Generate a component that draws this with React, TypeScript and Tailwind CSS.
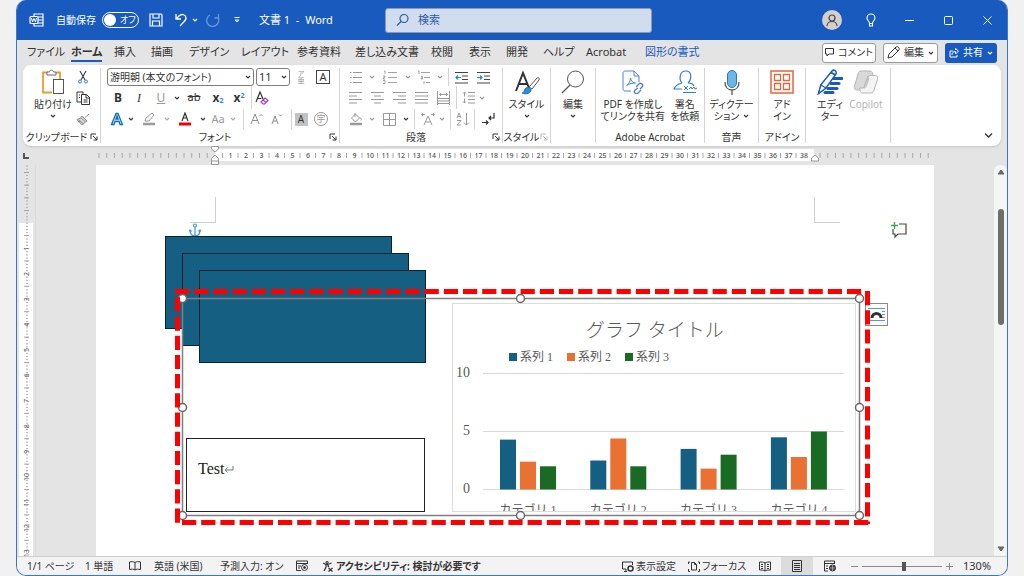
import type { ReactNode } from 'react';
import { useState } from 'react';

const TABS = [
  { label: 'ファイル', width: 'w-[44px]' },
  { label: 'ホーム', width: 'w-[43px]' },
  { label: '挿入', width: 'w-[37px]' },
  { label: '描画', width: 'w-[38px]' },
  { label: 'デザイン', width: 'w-[52px]' },
  { label: 'レイアウト', width: 'w-[56px]' },
  { label: '参考資料', width: 'w-[58px]' },
  { label: '差し込み文書', width: 'w-[76px]' },
  { label: '校閲', width: 'w-[38px]' },
  { label: '表示', width: 'w-[37px]' },
  { label: '開発', width: 'w-[37px]' },
  { label: 'ヘルプ', width: 'w-[43px]' },
  { label: 'Acrobat', width: 'w-[59px]' },
  { label: '図形の書式', width: 'w-[60px]' },
];

const SERIES = [
  { name: '系列 1', color: '#156082' },
  { name: '系列 2', color: '#e97132' },
  { name: '系列 3', color: '#196b24' },
];

const CATEGORIES = [
  { name: 'カテゴリ 1', values: [4.3, 2.4, 2] },
  { name: 'カテゴリ 2', values: [2.5, 4.4, 2] },
  { name: 'カテゴリ 3', values: [3.5, 1.8, 3] },
  { name: 'カテゴリ 4', values: [4.5, 2.8, 5] },
];

interface IconProps {
  w: number;
  h: number;
  className?: string;
  children: ReactNode;
}

function Icon({ w, h, className, children }: IconProps) {
  return (
    <svg
      width={w}
      height={h}
      viewBox={`0 0 ${w} ${h}`}
      fill="none"
      stroke="currentColor"
      strokeWidth="1"
      aria-hidden="true"
      className={`shrink-0 ${className ?? ''}`}
    >
      {children}
    </svg>
  );
}

function Chevron({ className }: { className?: string }) {
  return (
    <Icon w={6} h={4} className={className}>
      <path d="M1 1l2 2 2-2" strokeWidth="1.1" />
    </Icon>
  );
}

interface ToolProps {
  label: string;
  className: string;
  children: ReactNode;
}

function Tool({ label, className, children }: ToolProps) {
  return (
    <button type="button" aria-label={label} title={label} className={`flex shrink-0 items-center justify-center self-stretch ${className}`}>
      {children}
    </button>
  );
}

function Divider({ className }: { className: string }) {
  return (
    <span className={`flex shrink-0 justify-center self-stretch ${className}`}>
      <span className="w-px bg-[#d4d4d4]" />
    </span>
  );
}

interface GroupProps {
  label?: string;
  className: string;
  launcher?: 'enabled' | 'disabled';
  children: ReactNode;
}

function Group({ label, className, launcher, children }: GroupProps) {
  return (
    <section aria-label={label} className={`flex h-[75px] shrink-0 flex-col justify-between border-r border-[#d4d4d4] ${className}`}>
      <div className="flex">{children}</div>
      <div className="flex h-3 items-center text-[10px] leading-3 whitespace-nowrap">
        <span className="flex-1 text-center">{label}</span>
        {launcher && (
          <button
            type="button"
            aria-label={`${label}の詳細設定`}
            disabled={launcher === 'disabled'}
            className="flex w-[10px] shrink-0 items-center disabled:text-[#bbb]"
          >
            <Icon w={8} h={8}>
              <path d="M1 6V1h5M3 3l4 4M7 3.5V7H3.5" />
            </Icon>
          </button>
        )}
      </div>
    </section>
  );
}

interface BigButtonProps {
  icon: ReactNode;
  lines: string[];
  chevron?: 'below' | 'inline';
  className?: string;
}

function BigButton({ icon, lines, chevron, className }: BigButtonProps) {
  return (
    <button type="button" className={`flex flex-col items-center text-[10px] leading-3 whitespace-nowrap ${className ?? ''}`}>
      <span className="mb-[2px] flex h-7 items-center justify-center">{icon}</span>
      {lines.map((line, i) => (
        <span key={line} className="flex items-center gap-1">
          {line}
          {chevron === 'inline' && i === lines.length - 1 && <Chevron />}
        </span>
      ))}
      {chevron === 'below' && <Chevron className="mt-1" />}
    </button>
  );
}

function TitleBar() {
  return (
    <header className="flex h-10 shrink-0 items-center bg-[#185abd] text-white">
      <div className="flex h-full w-[368px] shrink-0 items-center pl-3">
        <Icon w={16} h={16}>
          <path d="M5 4.5V2h9v12H5v-2.5M9 5h5M9 8h5M9 11h5" strokeWidth="1.2" />
          <rect x="1" y="4.5" width="8" height="7" rx="1" fill="#185abd" strokeWidth="1.2" />
          <path d="M2.5 6l1 4L5 6.500l1.5 3.500 1-4" />
        </Icon>
        <span id="autosave" className="w-[57px] pl-[11px] text-[10px] whitespace-nowrap">
          自動保存
        </span>
        <button
          type="button"
          role="switch"
          aria-checked="false"
          aria-labelledby="autosave"
          className="flex h-4 w-[37px] shrink-0 items-center gap-1 rounded-full border border-white pl-px text-[9px] leading-3"
        >
          <span className="h-3 w-3 shrink-0 rounded-full bg-white" />
          オフ
        </button>
        <Tool label="上書き保存" className="w-[34px]">
          <Icon w={14} h={14}>
            <path d="M1 1h11l1 1v11H1zM4 1v4h6V1M3.5 13V8h7v5" strokeWidth="1.2" />
          </Icon>
        </Tool>
        <Tool label="元に戻す" className="w-4">
          <Icon w={14} h={14}>
            <path d="M2 1v5h5M2 6l3-3c3-3 7-1 7 2 0 2-1 3-6 8" strokeWidth="1.3" />
          </Icon>
        </Tool>
        <Tool label="元に戻す一覧" className="w-3">
          <Chevron />
        </Tool>
        <Tool label="やり直し" className="w-6 text-[#6b96da]">
          <Icon w={14} h={14}>
            <path d="M12.5 1v4h-4M12 4.5A6 6 0 1 1 4 2" strokeWidth="1.3" />
          </Icon>
        </Tool>
        <Tool label="クイック アクセス ツール バー" className="w-6">
          <Icon w={8} h={8}>
            <path d="M1.5 1.5h5M2 4h4L4 6z" />
          </Icon>
        </Tool>
        <h1 className="pl-[10px] text-[11px] whitespace-pre">{'文書 1  -  Word'}</h1>
      </div>
      <label className="flex h-[25px] w-[267px] min-w-0 shrink items-center gap-2 rounded-[3px] border border-[#8d99ae] bg-[#d1dcee] px-[10px] text-[#2a5ba8]">
        <Icon w={14} h={14}>
          <circle cx="8" cy="5.5" r="4" strokeWidth="1.2" />
          <path d="M5 8.5L1 12.5" strokeWidth="1.2" />
        </Icon>
        <input
          type="search"
          aria-label="検索"
          placeholder="検索"
          className="min-w-0 flex-1 bg-transparent text-[11px] outline-none placeholder:text-[#2a5ba8]"
        />
      </label>
      <div className="flex h-full flex-1 items-center justify-end">
        <Tool label="アカウント" className="w-[39px]">
          <span className="flex h-5 w-5 items-center justify-center rounded-full bg-[#d2d0ce] text-[#484644]">
            <Icon w={14} h={14}>
              <circle cx="7" cy="5" r="3" strokeWidth="1.2" />
              <path d="M2 13c0-6 10-6 10 0" strokeWidth="1.2" />
            </Icon>
          </span>
        </Tool>
        <Tool label="ヒント" className="w-[39px]">
          <Icon w={10} h={14}>
            <path d="M3.5 10.5C3.5 8 1 7.5 1 5a4 4 0 0 1 8 0c0 2.500-2.500 3-2.500 5.500zM3.5 10.5V13h3v-2.5" strokeWidth="1.1" />
          </Icon>
        </Tool>
        <Tool label="最小化" className="w-[39px]">
          <Icon w={9} h={9}>
            <path d="M0 4.5h9" />
          </Icon>
        </Tool>
        <Tool label="元のサイズ" className="w-[39px]">
          <Icon w={9} h={9}>
            <rect x=".5" y=".5" width="8" height="8" rx="1" />
          </Icon>
        </Tool>
        <Tool label="閉じる" className="w-[39px]">
          <Icon w={9} h={9}>
            <path d="M.5.5l8 8M8.5.5l-8 8" />
          </Icon>
        </Tool>
      </div>
    </header>
  );
}

function TabBar() {
  const [active, setActive] = useState('ホーム');

  return (
    <div className="flex h-[25px] shrink-0 items-center pr-[10px] pl-[10px] text-[11px]">
      <nav role="tablist" className="flex h-full">
        {TABS.map((tab) => (
          <button
            key={tab.label}
            type="button"
            role="tab"
            aria-selected={active === tab.label}
            onClick={() => setActive(tab.label)}
            className={`flex items-center whitespace-nowrap ${tab.width} ${tab.label === '図形の書式' ? 'text-[#185abd]' : ''}`}
          >
            <span
              className={`border-b-2 leading-4 ${active === tab.label ? 'border-[#185abd] font-bold' : 'border-transparent'}`}
            >
              {tab.label}
            </span>
          </button>
        ))}
      </nav>
      <div className="ml-auto flex gap-[7px]">
        <button type="button" className="flex h-5 w-[54px] items-center justify-center gap-1 rounded-[3px] border border-[#9a9a9a] bg-white text-[10px] whitespace-nowrap">
          <Icon w={9} h={9}>
            <path d="M.5.5h8V6H4L2 8V6H.5z" />
          </Icon>
          コメント
        </button>
        <button type="button" className="flex h-5 w-[55px] items-center justify-center gap-1 rounded-[3px] border border-[#9a9a9a] bg-white text-[10px]">
          <Icon w={13} h={13}>
            <path d="M1 12l1-4 7-7c2-1 4 1 3 3l-7 7zM8 2l3 3" />
          </Icon>
          編集
          <Chevron />
        </button>
        <button type="button" className="flex h-5 w-[52px] items-center justify-center gap-1 rounded-[3px] bg-[#185abd] text-[10px] text-white">
          <Icon w={10} h={10}>
            <path d="M4 3H1v6h7V7M3 7c0-2 1-3.5 3.5-3.5V6L9.5 3l-3-2.500V2" />
          </Icon>
          共有
          <Chevron />
        </button>
      </div>
    </div>
  );
}

function ClipboardGroup() {
  return (
    <Group label="クリップボード" className="w-[78px]" launcher="enabled">
      <div className="flex pl-[9px]">
        <BigButton
          className="w-[42px]"
          lines={['貼り付け']}
          chevron="below"
          icon={
            <Icon w={24} h={26}>
              <path d="M7 3.5H2v20h9M15 3.5h4V11" stroke="#ee9a2e" strokeWidth="1.8" />
              <path d="M6 6V3h2.5c0-2.500 4-2.500 4 0H15v3z" fill="#fff" stroke="#6a6a6a" />
              <rect x="12.5" y="10.5" width="10" height="14" fill="#fff" stroke="#555" />
            </Icon>
          }
        />
        <div className="flex w-[18px] flex-col">
          <Tool label="切り取り" className="h-[18px]">
            <Icon w={10} h={14}>
              <path d="M2 1l5 9M8 1L3 10" stroke="#444" strokeWidth="1.2" />
              <circle cx="2" cy="11.5" r="1.5" stroke="#1e88d8" />
              <circle cx="8" cy="11.5" r="1.5" stroke="#1e88d8" />
            </Icon>
          </Tool>
          <Tool label="コピー" className="h-[23px]">
            <Icon w={14} h={14}>
              <path d="M5 11H1V1h6v2M5.5 3.5h5l3 3v7h-8zM10 3.5V7h3.5M7.5 9h4M7.5 11h4M3 4h1M3 6.5h1" />
            </Icon>
          </Tool>
          <Tool label="書式のコピー" className="h-5 text-[#8c8c8c]">
            <Icon w={14} h={13}>
              <path d="M13 1L9 4.5M6 3l5 5-1.500 1L5 4.500zM5 5L1 6.500 6 12l3.500-3M3 7l4 3.500M2 9l2-1" fill="#d5d5d5" />
            </Icon>
          </Tool>
        </div>
      </div>
    </Group>
  );
}

function FontGroup() {
  return (
    <Group label="フォント" className="w-[239px]" launcher="enabled">
      <div className="flex flex-col pl-[6px]">
        <div className="flex h-[18px]">
          <div className="relative mr-[2px] w-[147px]">
            <select aria-label="フォント" className="block h-[18px] w-full appearance-none rounded-[3px] border border-[#7d7d7d] bg-white pl-[2px] text-[10px] leading-4">
              <option>游明朝 (本文のフォント)</option>
              <option>游ゴシック</option>
            </select>
            <Chevron className="pointer-events-none absolute top-[7px] right-[3px]" />
          </div>
          <div className="relative w-[34px]">
            <select aria-label="フォント サイズ" className="block h-[18px] w-full appearance-none rounded-[3px] border border-[#7d7d7d] bg-white pl-[2px] text-[11px] leading-4">
              <option>11</option>
              <option>12</option>
            </select>
            <Chevron className="pointer-events-none absolute top-[7px] right-[3px]" />
          </div>
          <Tool label="ルビ" className="w-[22px] flex-col text-[7px] leading-[7px] text-[#9a9a9a]">
            <span>ア</span>
            <span>亜</span>
          </Tool>
          <Tool label="囲み線" className="w-[22px]">
            <span className="h-[14px] w-[14px] border border-[#444] text-[11px] leading-3">A</span>
          </Tool>
        </div>
        <div className="flex h-[23px] text-[12px]">
          <Tool label="太字" className="w-[22px] font-bold">
            B
          </Tool>
          <Tool label="斜体" className="w-5 font-['Liberation_Serif',serif] italic">
            I
          </Tool>
          <Tool label="下線" className="w-6 text-[#9a9a9a] underline">
            U
          </Tool>
          <Tool label="下線の種類" className="w-2">
            <Chevron />
          </Tool>
          <Tool label="取り消し線" className="w-[26px] text-[11px] line-through">
            ab
          </Tool>
          <Tool label="下付き" className="w-[22px] font-bold">
            <span>
              x<sub className="text-[7px] text-[#1e88d8]">2</sub>
            </span>
          </Tool>
          <Tool label="上付き" className="w-5 font-bold">
            <span>
              x<sup className="text-[7px] text-[#1e88d8]">2</sup>
            </span>
          </Tool>
          <Divider className="w-1" />
          <Tool label="書式をすべてクリア" className="w-[18px]">
            <Icon w={14} h={14}>
              <path d="M1 11L5 1l3 7M2.5 7.5h4" strokeWidth="1.2" />
              <path d="M6 11l4-4 3 2.500L9.500 13H8zM8 9l3 2.500" stroke="#a33bb0" strokeWidth="1.2" />
            </Icon>
          </Tool>
        </div>
        <div className="flex h-5">
          <Tool label="文字の効果" className="w-5">
            <Icon w={14} h={14}>
              <path d="M1.5 12.5L6 1.500h2l4.500 11H10l-1-3H5l-1 3zM6 7h2L7 4z" fill="#bfe0f7" stroke="#1a6fba" strokeWidth="1.3" />
            </Icon>
          </Tool>
          <Tool label="文字の効果一覧" className="w-2">
            <Chevron />
          </Tool>
          <Tool label="蛍光ペン" className="w-7 text-[#9a9a9a]">
            <Icon w={14} h={14}>
              <path d="M3 9l1-3 6-5 2 2-5 6z" />
              <path d="M1 12h12" strokeWidth="2.5" />
            </Icon>
          </Tool>
          <Tool label="蛍光ペンの色" className="w-2 text-[#aaa]">
            <Chevron />
          </Tool>
          <Tool label="フォントの色" className="w-7">
            <Icon w={14} h={14}>
              <path d="M4 9l3-8 3 8M5 6h4" strokeWidth="1.2" />
              <path d="M1 12h12" stroke="#f00000" strokeWidth="3" />
            </Icon>
          </Tool>
          <Tool label="フォントの色一覧" className="w-2">
            <Chevron />
          </Tool>
          <Tool label="文字種の変換" className="w-[22px] text-[11px] text-[#9a9a9a]">
            Aa
          </Tool>
          <Tool label="文字種一覧" className="w-2 text-[#aaa]">
            <Chevron />
          </Tool>
          <Divider className="w-3" />
          <Tool label="フォント サイズの拡大" className="w-4 text-[#8c8c8c]">
            <Icon w={14} h={12}>
              <path d="M1 11l4-10 4 10M2.5 7.500h5M9.5 3L11 1.5 12.5 3" />
            </Icon>
          </Tool>
          <Tool label="フォント サイズの縮小" className="w-6 text-[#8c8c8c]">
            <Icon w={12} h={12}>
              <path d="M1 11l3-8 3 8M2 8h4M8 1.5L9.5 3 11 1.5" />
            </Icon>
          </Tool>
          <Divider className="w-1" />
          <Tool label="文字の網かけ" className="w-4">
            <span className="h-[13px] w-[13px] bg-[#c3c3c3] text-[10px] leading-[13px]">A</span>
          </Tool>
          <Tool label="囲い文字" className="w-6">
            <span className="h-[14px] w-[14px] rounded-full border border-[#999] text-[9px] leading-3 text-[#999]">字</span>
          </Tool>
        </div>
      </div>
    </Group>
  );
}

function ParagraphGroup() {
  return (
    <Group label="段落" className="w-[163px]" launcher="enabled">
      <div className="flex flex-col pl-1 text-[#9a9a9a]">
        <div className="flex h-[18px]">
          <Tool label="箇条書き" className="w-6">
            <Icon w={14} h={14}>
              <path d="M4 2.5h9M4 7.5h9M4 12.5h9M1 2.5h1.5M1 7.5h1.5M1 12.5h1.5" />
            </Icon>
          </Tool>
          <Tool label="箇条書き一覧" className="w-2">
            <Chevron />
          </Tool>
          <Tool label="段落番号" className="w-7">
            <Icon w={14} h={14}>
              <path d="M5 2.5h9M5 7.5h9M5 12.5h9M1 1h1v3M0 6h2v1.500H.5V9H2M0 10.500h2v3H0" strokeWidth=".9" />
            </Icon>
          </Tool>
          <Tool label="段落番号一覧" className="w-2">
            <Chevron />
          </Tool>
          <Tool label="アウトライン" className="w-6">
            <Icon w={14} h={14}>
              <path d="M4 2.5h9M7 7.5h6M9 12.5h4M1 1h1v3M4 6.500h1.500V9H4V8h1M7 11v3" strokeWidth=".9" />
            </Icon>
          </Tool>
          <Tool label="アウトライン一覧" className="w-2">
            <Chevron />
          </Tool>
          <Divider className="w-2" />
          <Tool label="インデントを減らす" className="w-[18px] text-[#444]">
            <Icon w={13} h={13}>
              <path d="M0 1.5h13M7 5h6M7 8.5h6M0 12h13" />
              <path d="M6 6.5H1M3 4.5l-2 2 2 2" stroke="#1e88d8" strokeWidth="1.2" />
            </Icon>
          </Tool>
          <Tool label="インデントを増やす" className="w-[26px] text-[#444]">
            <Icon w={13} h={13}>
              <path d="M0 1.5h13M7 5h6M7 8.5h6M0 12h13" />
              <path d="M0 6.5h5M3 4.5l2 2-2 2" stroke="#1e88d8" strokeWidth="1.2" />
            </Icon>
          </Tool>
        </div>
        <div className="flex h-[23px]">
          <Tool label="左揃え" className="w-[22px]">
            <Icon w={13} h={13}>
              <path d="M0 1.5h13M0 5h8M0 8.5h13M0 12h8" />
            </Icon>
          </Tool>
          <Tool label="中央揃え" className="w-[22px]">
            <Icon w={13} h={13}>
              <path d="M0 1.5h13M3 5h7M0 8.5h13M3 12h7" />
            </Icon>
          </Tool>
          <Tool label="右揃え" className="w-[22px]">
            <Icon w={13} h={13}>
              <path d="M0 1.5h13M5 5h8M0 8.5h13M5 12h8" />
            </Icon>
          </Tool>
          <Tool label="両端揃え" className="w-[22px]">
            <Icon w={13} h={13}>
              <path d="M0 1.5h13M0 5h13M0 8.5h13M0 12h13" />
            </Icon>
          </Tool>
          <Tool label="均等割り付け" className="w-[22px]">
            <Icon w={13} h={14}>
              <path d="M.5 0v14M12.5 0v14M2 3.500h9M4 2L2.5 3.500 4 5M9 2l1.500 1.500L9 5M0 7.500h13M0 10h13M0 12.500h13" />
            </Icon>
          </Tool>
          <Divider className="w-1" />
          <Tool label="行と段落の間隔" className="w-5">
            <Icon w={13} h={13}>
              <path d="M2.5 1v4.500M1 2.500L2.500 1 4 2.500M2.500 7.500V12M1 10.500L2.500 12 4 10.500M6 1.500h7M6 5h7M6 8.500h7M6 12h7" />
            </Icon>
          </Tool>
          <Tool label="行間一覧" className="w-2">
            <Chevron />
          </Tool>
        </div>
        <div className="flex h-5">
          <Tool label="塗りつぶし" className="w-6">
            <Icon w={14} h={14}>
              <path d="M2.5 6l4-4 4 4-4 4zM6 1v4M10.5 5.500c2 1 2 2 1.500 3" />
              <path d="M1 12h12" strokeWidth="2.5" />
            </Icon>
          </Tool>
          <Tool label="塗りつぶしの色" className="w-2">
            <Chevron />
          </Tool>
          <Tool label="罫線" className="w-[26px]">
            <Icon w={13} h={13}>
              <path d="M.5.5h12v12H.5zM6.5 0v13M0 6.5h13" />
            </Icon>
          </Tool>
          <Tool label="罫線一覧" className="w-2 text-[#333]">
            <Chevron />
          </Tool>
          <Divider className="w-2" />
          <Tool label="拡張書式" className="w-5">
            <Icon w={14} h={14}>
              <path d="M3 13l4-9 4 9M4.5 10h5M4 2.5H1M2 1L.7 2.500 2 4M10 2.500h3M12 1l1.300 1.500L12 4" />
            </Icon>
          </Tool>
          <Tool label="拡張書式一覧" className="w-2">
            <Chevron />
          </Tool>
          <Divider className="w-2" />
          <Tool label="並べ替え" className="w-[18px]">
            <Icon w={14} h={14}>
              <path d="M1 6l2-5 2 5M2 4.500h2M1 8.500h4L1 13h4M10.500 1v12M8 10.500l2.500 2.500 2.500-2.500" />
            </Icon>
          </Tool>
          <Divider className="w-1" />
          <Tool label="編集記号の表示" className="w-6 text-[#333]">
            <Icon w={14} h={14}>
              <path d="M13 1v5H8M10 4L8 6l2 2M1 10.500h6M5 8.500l2 2-2 2" strokeWidth="1.2" />
            </Icon>
          </Tool>
        </div>
      </div>
    </Group>
  );
}

function Ribbon() {
  return (
    <div className="mx-[6px] flex h-[81px] shrink-0 overflow-hidden rounded-lg bg-white py-[3px] shadow-sm">
      <ClipboardGroup />
      <FontGroup />
      <ParagraphGroup />
      <Group label="スタイル" className="w-12" launcher="disabled">
        <BigButton
          className="w-full"
          lines={['スタイル']}
          chevron="below"
          icon={
            <Icon w={26} h={26}>
              <path d="M2 22L9 4l6 15M5 15h8" stroke="#333" strokeWidth="2" />
              <path d="M15 18l8-9c1-1 3 0 2 2l-7 9z" fill="#fff" stroke="#555" />
              <path d="M8 24c2 0 2-2 3-4 2-3 6-1 6 1 0 3-5 5-9 3z" fill="#2b8fd9" stroke="#1b6fb5" />
            </Icon>
          }
        />
      </Group>
      <Group className="w-[45px]">
        <BigButton
          className="w-full"
          lines={['編集']}
          chevron="below"
          icon={
            <Icon w={26} h={26}>
              <circle cx="15.5" cy="10" r="8" stroke="#555" />
              <path d="M10 16l-8 8" stroke="#555" strokeWidth="1.3" />
            </Icon>
          }
        />
      </Group>
      <Group label="Adobe Acrobat" className="w-[109px]">
        <div className="flex w-full justify-center gap-[5px]">
          <BigButton
            lines={['PDF を作成し', 'てリンクを共有']}
            icon={
              <Icon w={22} h={24} className="text-[#4a80e8]">
                <path d="M9 21H3c-1 0-2-1-2-2V3c0-1 1-2 2-2h9l5 5v6M12 1v5h5" />
                <path d="M4.5 15.500c2-1 4-4.500 4-7.500.5 3 2.500 5 5 5-3 0-6 .5-9 2.500z" />
                <path d="M14 17l3-3c2-2 5 1 3 3l-2 2M16 18l-3 2c-2 2 1 5 3 3l3-3" strokeWidth="1.3" />
              </Icon>
            }
          />
          <BigButton
            lines={['署名', 'を依頼']}
            icon={
              <Icon w={24} h={24} className="text-[#2f7be6]">
                <path d="M9 13c-3-3-3-12 4-12 6 0 6 8 2 12M9 13c-4 1-7 3-8 6h8M15 13c3 0 5 1 6 3" strokeWidth="1.2" />
                <path d="M11 16l4 4M15 16l-4 4M16 19l2-2 1 2 2-2 1 2 2-1M10 22.500h13" />
              </Icon>
            }
          />
        </div>
      </Group>
      <Group label="音声" className="w-[54px]">
        <BigButton
          className="w-full"
          lines={['ディクテー', 'ション']}
          chevron="inline"
          icon={
            <Icon w={16} h={26}>
              <rect x="3.5" y="1.5" width="9" height="17" rx="4.5" fill="#6fb6e8" stroke="#2878b8" />
              <path d="M1 13c0 5 3 8 7 8s7-3 7-8M8 21v5" stroke="#555" strokeWidth="1.3" />
            </Icon>
          }
        />
      </Group>
      <Group label="アドイン" className="w-[47px]">
        <BigButton
          className="w-full"
          lines={['アド', 'イン']}
          icon={
            <Icon w={24} h={24} className="text-[#e2673e]">
              <rect x="1" y="1" width="22" height="22" strokeWidth="1.5" />
              <path d="M4.500 4.500h6v6h-6zM13.500 4.500h6v6h-6zM4.500 13.500h6v6h-6zM13.500 13.500h6v6h-6z" strokeWidth="1.3" />
            </Icon>
          }
        />
      </Group>
      <Group className="w-[85px]">
        <div className="flex w-full pl-[6px]">
          <BigButton
            className="w-9"
            lines={['エディ', 'ター']}
            icon={
              <Icon w={26} h={26} className="text-[#185abd]">
                <path d="M16 9.500h9M14 14.500h8M11 19.500h9M8 23.500h8" strokeWidth="3.2" strokeLinecap="round" />
                <path d="M1.500 24.500l2.500-9L15 2c2-2 5 0 4 3L9 19z" fill="#fff" strokeWidth="1.5" />
                <path d="M4 16l5 3-7.500 5.500z" fill="#fff" strokeWidth="1.2" />
                <path d="M14 3.500L18.500 6" strokeWidth="2" />
              </Icon>
            }
          />
          <BigButton
            className="w-9 text-[#b5b5b5]"
            lines={['Copilot']}
            icon={
              <Icon w={26} h={24} className="text-[#b5b5b5]">
                <path d="M8 1h9c2 0 2.500 2 3 5h-5l-4 11c-.5 2-1.500 3-3.500 3H3.500c-2 0-2.500-2-2-4L5 4c.5-2 1.500-3 3-3z" fill="#d9d9d9" />
                <path d="M18 23H9.500c-2 0-2.500-2-3-5H11l4-10c.5-2 1.500-2.500 3.500-2.500h4c2 0 2.500 2 2 4L21 20c-.5 2-1.500 3-3 3z" fill="#f4f4f4" />
                <path d="M11 18c1 0 2-1 2.500-2.500L16 8" />
              </Icon>
            }
          />
        </div>
      </Group>
      <button type="button" aria-label="リボンを折りたたむ" className="mt-auto mr-2 mb-1 ml-auto">
        <Icon w={9} h={7}>
          <path d="M1 1.500l3.500 3.500L8 1.500" strokeWidth="1.3" />
        </Icon>
      </button>
    </div>
  );
}

function HorizontalRuler() {
  const numbers = Array.from({ length: 38 }, (_, i) => i + 1);
  return (
    <div className="flex h-[19px] shrink-0">
      <div className="flex w-[19px] items-center pl-[6px] text-[#555]">
        <Icon w={6} h={6}>
          <path d="M1 0v5h5" strokeWidth="2" />
        </Icon>
      </div>
      <div className="flex min-w-0 flex-1 justify-center">
        <svg width="838" height="19" aria-hidden="true" className="shrink-0">
          <rect x="119" y="3" width="599" height="12" fill="#fff" />
          {Array.from({ length: 15 }, (_, i) => (
            <path key={i} d={`M${3 + i * 7.73} 7v5`} stroke="#a8a8a8" />
          ))}
          {numbers.map((n) => (
            <g key={n}>
              <path d={`M${126.5 + (n - 1) * 15.5} 7v5`} stroke="#a8a8a8" />
              <text x={134.5 + (n - 1) * 15.5} y="12" textAnchor="middle" className="fill-[#555] text-[7px] font-medium">
                {n}
              </text>
            </g>
          ))}
          {Array.from({ length: 15 }, (_, i) => (
            <path key={i} d={`M${724 + i * 7.73} 7v5`} stroke="#a8a8a8" />
          ))}
          <path d="M115.5.5h7V3L119 6l-3.500-3zM115.500 18.500v-6L119 9l3.500 3.500v6zM115.500 15h7M715.500 15v-3l3.500-3 3.500 3v3z" fill="#fff" stroke="#999" />
        </svg>
      </div>
      <div className="w-[13px]" />
    </div>
  );
}

function VerticalRuler() {
  return (
    <div className="w-[19px] shrink-0 overflow-hidden border-r border-[#dadada]">
      <svg width="18" height="392" aria-hidden="true">
        <rect x="2" y="58" width="14" height="334" fill="#fff" />
        {Array.from({ length: 123 }, (_, i) => (
          <path key={i} d={`M9 ${1 + i * 3.175}h2`} stroke="#b0b0b0" />
        ))}
        {Array.from({ length: 4 }, (_, i) => (
          <path key={i} d={`M7 ${7.5 + i * 12.7}h5`} stroke="#a0a0a0" />
        ))}
        {Array.from({ length: 13 }, (_, i) => (
          <g key={i}>
            <path d={`M7 ${70.5 + i * 25.4}h5`} stroke="#a8a8a8" />
            <text transform={`translate(12 ${83.5 + i * 25.4}) rotate(-90)`} textAnchor="middle" className="fill-[#555] text-[7px]">
              {i + 1}
            </text>
          </g>
        ))}
      </svg>
    </div>
  );
}

function Chart() {
  return (
    <svg
      width="404"
      height="209"
      role="img"
      aria-label="グラフ タイトル"
      className="absolute top-[138px] left-[356px] border border-[#dcdcdc] bg-white font-['Liberation_Serif','Noto_Sans_CJK_JP',serif] [font-feature-settings:normal]"
    >
      <text x="202" y="33" textAnchor="middle" className="fill-[#595959] text-[19px] font-light">
        グラフ タイトル
      </text>
      {SERIES.map((series, i) => (
        <g key={series.name}>
          <rect x={56 + i * 58} y="49" width="8" height="8" fill={series.color} />
          <text x={67 + i * 58} y="57" className="fill-[#595959] text-[12px]">
            {series.name}
          </text>
        </g>
      ))}
      {[10, 5, 0].map((tick, i) => (
        <g key={tick}>
          <path d={`M30 ${69.5 + i * 58}h361`} stroke="#d9d9d9" />
          <text x="17" y={73 + i * 58} textAnchor="end" className="fill-[#595959] text-[14px]">
            {tick}
          </text>
        </g>
      ))}
      {CATEGORIES.map((category, c) => (
        <g key={category.name}>
          {category.values.map((value, s) => (
            <rect
              key={s}
              x={47 + c * 90.3 + s * 20}
              y={185.5 - value * 11.6}
              width="16"
              height={value * 11.6}
              fill={SERIES[s].color}
            />
          ))}
          <text x={75 + c * 90.3} y="210" textAnchor="middle" className="fill-[#595959] text-[12px]">
            {category.name}
          </text>
        </g>
      ))}
    </svg>
  );
}

function Selection() {
  const handles = [0, 338, 677].flatMap((x) => [0, 109, 217].map((y) => [x, y])).filter(([x, y]) => !(x === 338 && y === 109));
  return (
    <svg width="716" height="250" aria-hidden="true" className="pointer-events-none absolute top-[120px] left-[75px]">
      <rect x="11.5" y="13.5" width="677" height="217" fill="none" stroke="#7f7f7f" strokeWidth="1.5" />
      {handles.map(([x, y]) => (
        <circle key={`${x}-${y}`} cx={11.5 + x} cy={13.5 + y} r="4" fill="#fff" stroke="#666" strokeWidth="1.5" />
      ))}
    </svg>
  );
}

function DashedFrame() {
  return (
    <svg width="716" height="250" aria-hidden="true" className="pointer-events-none absolute top-[120px] left-[75px]">
      <g stroke="#fe0000" strokeWidth="5" strokeDasharray="14.2 5">
        <path d="M4 6.5h687" />
        <path d="M6.5 12.3v226" />
        <path d="M11 237.5h688" />
        <path d="M696.5 6v233" />
      </g>
    </svg>
  );
}

function Page() {
  return (
    <article className="relative mx-auto h-full w-[838px] shrink-0 overflow-hidden bg-white">
      <span className="absolute top-8 left-[94px] h-[26px] w-[26px] border-r border-b border-[#cfcfcf]" />
      <span className="absolute top-8 left-[718px] h-[26px] w-[26px] border-b border-l border-[#cfcfcf]" />
      <Icon w={12} h={14} className="absolute top-[58px] left-[93px] text-[#3f9bd8]">
        <circle cx="6" cy="2.5" r="1.5" strokeWidth="1.2" />
        <path d="M6 4v9M1 7c0 4 2 6 5 6s5-2 5-6M0 8.500L1 7l1.500 1.500M9.500 8.500L11 7l1 1.500" strokeWidth="1.2" />
      </Icon>
      <div className="absolute top-[71px] left-[69px] h-[93px] w-[227px] border border-[#042433] bg-[#156082]" />
      <div className="absolute top-[88px] left-[86px] h-[93px] w-[227px] border border-[#042433] bg-[#156082]" />
      <div className="absolute top-[105px] left-[103px] h-[93px] w-[227px] border border-[#042433] bg-[#156082]" />
      <div className="absolute top-[273px] left-[90px] flex h-[74px] w-[239px] items-center border border-[#222] bg-white px-[11px] pb-3 font-['Liberation_Serif',serif] text-[16px] text-[#222]">
        <span>Test</span>
        <Icon w={10} h={8} className="text-[#777]">
          <path d="M9 1v4H1M3.5 2.500L1 5l2.500 2.500" />
        </Icon>
      </div>
      <Chart />
      <Selection />
      <button type="button" aria-label="レイアウト オプション" className="absolute top-[138px] left-[769px] flex h-[23px] w-[23px] items-center justify-center border border-[#8a8a8a] bg-white">
        <Icon w={19} h={19}>
          <path d="M1 3.500h17M15 6.500h3M15 9.500h3M15 12.500h3M1 15.500h17" stroke="#4a9fdc" strokeWidth="1.2" />
          <path d="M5 13c0-6 9-6 9 0" stroke="#333" strokeWidth="3" />
        </Icon>
      </button>
      <DashedFrame />
      <button type="button" aria-label="コメントの追加" className="absolute top-[56px] left-[794px]">
        <Icon w={18} h={18}>
          <path d="M9 3h7v10H8l-3 3v-3H3V8" stroke="#444" strokeWidth="1.2" />
          <path d="M1 4.500h7M4.500 1v7" stroke="#34a853" strokeWidth="1.4" />
        </Icon>
      </button>
    </article>
  );
}

function ScrollBar() {
  return (
    <div className="flex w-[13px] shrink-0 flex-col items-center rounded-t-md bg-[#f5f5f5]">
      <Icon w={8} h={6} className="mt-1 text-[#666]">
        <path d="M4 1L1 5h6z" fill="currentColor" />
      </Icon>
      <span className="mt-[34px] h-[116px] w-[6px] rounded-full bg-[#6e6e6e]" />
      <Icon w={8} h={6} className="mt-auto mb-1 text-[#666]">
        <path d="M4 5L1 1h6z" fill="currentColor" />
      </Icon>
    </div>
  );
}

function StatusBar() {
  const [zoom, setZoom] = useState(52);

  return (
    <footer className="flex h-[19px] shrink-0 items-center border-t border-[#cfcfcf] bg-[#f3f3f3] pl-[10px] text-[10px] whitespace-nowrap">
      <span className="w-[58px]">1/1 ページ</span>
      <span className="w-10">1 単語</span>
      <button type="button" aria-label="文章校正" className="w-[29px] pl-1">
        <Icon w={12} h={10}>
          <path d="M6 1.500C4.500.5 2.500.5.500 1v7.500c2-.5 4-.5 5.500.5 1.500-1 3-1 5.500-.5V1C9.500.5 7.500.5 6 1.500zM6 1.500V9" />
        </Icon>
      </button>
      <span className="w-[66px]">英語 (米国)</span>
      <span className="w-[76px]">予測入力: オン</span>
      <button type="button" aria-label="マクロの記録" className="w-[26px]">
        <Icon w={13} h={12}>
          <path d="M5 10.500H.500V1h11v3M0 3.500h11M2 6h3M2 8h2" />
          <circle cx="8.5" cy="7.5" r="3" />
          <circle cx="8.5" cy="7.5" r="1" fill="currentColor" />
        </Icon>
      </button>
      <button type="button" className="flex items-center gap-[2px] font-bold">
        <Icon w={12} h={12}>
          <path d="M5 1.500a1 1 0 1 0 .1 0M1 3l3 1.500h2L9.500 3M4 4.500V7L2 11M6 4.500V6l1 1M6.500 8l4 3.500M10.500 8l-4 3.500" strokeWidth="1.2" />
        </Icon>
        アクセシビリティ: 検討が必要です
      </button>
      <div className="ml-auto flex h-full items-center">
        <button type="button" className="flex w-[66px] items-center gap-[2px]">
          <Icon w={12} h={11}>
            <path d="M4 8H.500V1h10v3M2 10.500h3M4 8v2.500" />
            <circle cx="8.5" cy="7.5" r="2.5" strokeWidth="1.5" />
          </Icon>
          表示設定
        </button>
        <button type="button" className="flex w-[61px] items-center gap-[2px]">
          <Icon w={12} h={11}>
            <path d="M2 1H.500v2M10 1h1.500v2M.500 8v2.500H2M11.500 8v2.500H10M3.500 1.500h3l2 2V9h-5zM6.500 1.500v2h2" />
          </Icon>
          フォーカス
        </button>
        <Tool label="閲覧モード" className="w-8">
          <Icon w={12} h={11}>
            <path d="M6 2C4.500 1 2.500 1 .500 1v8c2 0 4 0 5.500 1 1.500-1 3-1 5.500-1V1C9.500 1 7.500 1 6 2zM6 2v8M2 3.500h2M2 5.500h2M2 7.500h2M8 3.500h2M8 5.500h2M8 7.500h2" />
          </Icon>
        </Tool>
        <Tool label="印刷レイアウト" className="w-8 bg-[#dcdcdc]">
          <Icon w={10} h={12}>
            <path d="M.500.500h9v11h-9zM2 3.500h6M2 5.500h6M2 7.500h6M2 9.500h6" />
          </Icon>
        </Tool>
        <Tool label="Web レイアウト" className="w-[34px]">
          <Icon w={12} h={12}>
            <path d="M4 11H.500V1h10v3M0 3.500h10M2 6h2M2 8.500h2" />
            <circle cx="8.5" cy="8" r="3" fill="#444" />
            <path d="M6 8h5M8.500 5v6" stroke="#ccc" strokeWidth=".6" />
          </Icon>
        </Tool>
        <Tool label="縮小" className="w-[15px] text-[#888]">
          <Icon w={7} h={7}>
            <path d="M0 3.500h7" />
          </Icon>
        </Tool>
        <input
          type="range"
          aria-label="ズーム"
          value={zoom}
          onChange={(event) => setZoom(Number(event.target.value))}
          className="h-[9px] w-20 appearance-none bg-[linear-gradient(#8a8a8a,#8a8a8a)] bg-[length:100%_1px] bg-center bg-no-repeat [&::-webkit-slider-thumb]:h-[9px] [&::-webkit-slider-thumb]:w-1 [&::-webkit-slider-thumb]:appearance-none [&::-webkit-slider-thumb]:bg-[#555]"
        />
        <Tool label="拡大" className="w-[15px] text-[#888]">
          <Icon w={7} h={7}>
            <path d="M0 3.500h7M3.500 0v7" />
          </Icon>
        </Tool>
        <span className="w-[50px] pl-[6px] text-[11px]">130%</span>
      </div>
    </footer>
  );
}

export default function App() {
  return (
    <div className="h-screen bg-[#f1f1f1] px-4 font-['Noto_Sans','Noto_Sans_CJK_JP',sans-serif] text-[#333] [font-feature-settings:'palt']">
      <div className="flex h-full flex-col overflow-hidden rounded-[10px] border border-t-0 border-[#3a76cb] bg-[#e4e4e4]">
        <TitleBar />
        <TabBar />
        <Ribbon />
        <HorizontalRuler />
        <main className="flex min-h-0 flex-1">
          <VerticalRuler />
          <div className="flex min-w-0 flex-1 overflow-hidden">
            <Page />
          </div>
          <ScrollBar />
        </main>
        <StatusBar />
      </div>
    </div>
  );
}
